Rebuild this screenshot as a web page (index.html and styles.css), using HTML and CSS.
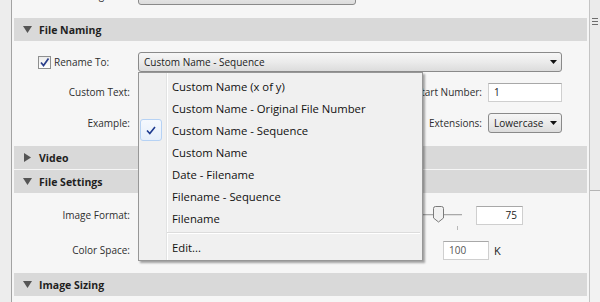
FILE: index.html
```html
<!DOCTYPE html>
<html lang="en">
<head>
    <meta charset="UTF-8">
    <title>Export - File Naming</title>
    <link rel="stylesheet" href="styles.css">
</head>
<body>

<div class="window">
    <div class="side"></div>

    <div class="panel">
        <!-- row scrolled mostly out of view -->
        <div class="row row-cut">
            <span class="lbl">Existing Files:</span>
            <div class="combo combo-mid"><span class="combo-text">Ask what to do</span></div>
        </div>

        <section class="section">
            <div class="sec-head">
                <svg class="tri" width="9" height="7" viewBox="0 0 9 7"><polygon points="0,0 9,0 4.5,7" fill="#555"/></svg>
                File Naming
            </div>
            <div class="sec-body naming">
                <div class="row">
                    <label class="chk-cell">
                        <span class="chk">
                            <svg width="11" height="11" viewBox="0 0 11 11"><path d="M2 5.5 L4.5 8.5 L9.5 1.5" fill="none" stroke="#2b3f8c" stroke-width="1.7"/></svg>
                        </span>
                        Rename To:
                    </label>
                    <div class="combo combo-wide">
                        <span class="combo-text">Custom Name - Sequence</span>
                        <svg class="arrow" width="7" height="4" viewBox="0 0 7 4"><polygon points="0,0 7,0 3.5,4" fill="#111"/></svg>

                        <ul class="menu">
                            <li>Custom Name (x of y)</li>
                            <li>Custom Name - Original File Number</li>
                            <li class="checked">
                                <span class="mark">
                                    <svg width="10" height="9" viewBox="0 0 10 9"><path d="M1 4.5 L3.8 7.5 L9 1" fill="none" stroke="#1d3a8f" stroke-width="1.6"/></svg>
                                </span>
                                Custom Name - Sequence
                            </li>
                            <li>Custom Name</li>
                            <li>Date - Filename</li>
                            <li>Filename - Sequence</li>
                            <li>Filename</li>
                            <li class="sep"></li>
                            <li>Edit...</li>
                        </ul>
                    </div>
                </div>
                <div class="row gap10">
                    <span class="lbl">Custom Text:</span>
                    <div class="field field-grow"></div>
                    <span class="lbl-right">Start Number:</span>
                    <div class="field field-num">1</div>
                </div>
                <div class="row gap11">
                    <span class="lbl">Example:</span>
                    <span class="example"></span>
                    <span class="lbl-right">Extensions:</span>
                    <div class="combo combo-small">
                        <span class="combo-text">Lowercase</span>
                        <svg class="arrow" width="7" height="4" viewBox="0 0 7 4"><polygon points="0,0 7,0 3.5,4" fill="#111"/></svg>
                    </div>
                </div>
            </div>
        </section>

        <section class="section closed">
            <div class="sec-head">
                <svg class="tri" width="9" height="9" viewBox="0 0 9 9"><polygon points="1,0 8,4.5 1,9" fill="#555"/></svg>
                Video
            </div>
        </section>

        <section class="section">
            <div class="sec-head">
                <svg class="tri" width="9" height="7" viewBox="0 0 9 7"><polygon points="0,0 9,0 4.5,7" fill="#555"/></svg>
                File Settings
            </div>
            <div class="sec-body settings">
                <div class="row row-format">
                    <span class="lbl">Image Format:</span>
                    <div class="combo combo-format"></div>
                    <div class="slider">
                        <div class="track"></div>
                        <svg class="thumb" width="11" height="17" viewBox="0 0 11 17">
                            <path d="M0.5 2.5 Q0.5 0.5 2.5 0.5 H8.5 Q10.5 0.5 10.5 2.5 V12 L5.5 16 L0.5 12 Z" fill="#f1f1f1" stroke="#7a7a7a"/>
                        </svg>
                        <span class="tick"></span>
                    </div>
                    <div class="field field-quality">75</div>
                </div>
                <div class="row row-space">
                    <span class="lbl">Color Space:</span>
                    <div class="combo combo-format"></div>
                    <div class="spacer"></div>
                    <div class="field field-size">100</div>
                    <span class="unit">K</span>
                </div>
            </div>
        </section>

        <section class="section">
            <div class="sec-head">
                <svg class="tri" width="9" height="7" viewBox="0 0 9 7"><polygon points="0,0 9,0 4.5,7" fill="#555"/></svg>
                Image Sizing
            </div>
        </section>
    </div>

    <div class="scrollbar">
        <div class="scroll-thumb">
            <span class="grip"></span>
            <span class="grip"></span>
            <span class="grip"></span>
        </div>
    </div>
</div>

</body>
</html>
```

FILE: styles.css
```css
body {
    margin: 0;
    width: 600px;
    height: 302px;
    overflow: hidden;
    font-family: "Open Sans", "Noto Sans", sans-serif;
    font-size: 10px;
    color: #2e2e2e;
    background-color: #ededed;
}
.window {
    display: flex;
    height: 302px;
}
.side {
    width: 11px;
    background-color: #ededed;
}
.panel {
    flex: 1;
    border-left: 1px solid #a3a3a3;
    background-color: #f6f6f6;
    padding: 0 2px;
}

/* rows */
.row {
    display: flex;
    align-items: center;
    height: 20px;
    padding-right: 25px;
}
.row-cut {
    margin-top: -15px;
    margin-bottom: 13px;
}
.gap10 {
    margin-top: 10px;
}
.gap11 {
    margin-top: 11px;
}
.lbl {
    width: 116px;
    margin-right: 8px;
    text-align: right;
    white-space: nowrap;
}
.lbl-right {
    margin: 0 6px 0 10px;
    white-space: nowrap;
}
.chk-cell {
    width: 100px;
    padding-left: 24px;
    display: flex;
    align-items: center;
}
.chk {
    width: 11px;
    height: 11px;
    border: 1px solid #8e8f8f;
    background: linear-gradient(#ececec, #ffffff);
    margin-right: 3px;
    display: flex;
    align-items: center;
    justify-content: center;
}

/* section headers */
.sec-head {
    height: 23px;
    display: flex;
    align-items: center;
    padding-left: 9px;
    background-color: #d9d9d9;
    font-weight: bold;
    font-size: 10.5px;
    color: #1f1f1f;
}
.tri {
    margin-right: 7px;
}
.closed {
    margin-bottom: 1px;
}
.naming {
    padding: 11px 0 13px;
}
.settings {
    padding: 12px 0 13px;
}

/* combos and fields */
.combo {
    position: relative;
    box-sizing: border-box;
    height: 20px;
    display: flex;
    align-items: center;
    padding: 0 4px 0 5px;
    border: 1px solid #8a8a8a;
    border-radius: 3px;
    background: linear-gradient(#f6f6f6, #ebebeb 50%, #dcdcdc);
    color: #222;
    white-space: nowrap;
}
.combo-text {
    flex: 1;
}
.combo-mid {
    width: 218px;
}
.combo-wide {
    flex: 1;
}
.combo-small {
    width: 74px;
}
.combo-format {
    width: 90px;
}
.field {
    box-sizing: border-box;
    height: 19px;
    display: flex;
    align-items: center;
    padding: 0 5px;
    background-color: #fff;
    border: 1px solid #cfcfcf;
    border-top-color: #a8a8a8;
    color: #222;
}
.field-grow {
    flex: 1;
}
.field-num {
    width: 74px;
}
.example {
    flex: 1;
}

/* dropdown menu */
.menu {
    position: absolute;
    top: 19px;
    left: -1px;
    z-index: 2;
    box-sizing: border-box;
    width: 285px;
    margin: 0;
    padding: 2px 2px 2px 1px;
    list-style: none;
    border: 1px solid #979797;
    background: linear-gradient(to right, transparent 27px, #e2e3e3 27px, #e2e3e3 28px, #ffffff 28px, #ffffff 29px, transparent 29px), #f0f0f0;
    box-shadow: 2px 2px 2px rgba(0, 0, 0, 0.35);
    font-size: 11.3px;
    color: #111;
}
.menu li {
    height: 22px;
    display: flex;
    align-items: center;
    padding-left: 32px;
}
.menu li.checked {
    padding-left: 0;
}
.mark {
    box-sizing: border-box;
    width: 22px;
    height: 22px;
    margin-right: 10px;
    display: flex;
    align-items: center;
    justify-content: center;
    border: 1px solid #b6d2f4;
    border-radius: 3px;
    background: linear-gradient(#f5f9fe, #e6effb);
}
.menu li.sep {
    height: 7px;
    padding-left: 0;
    margin-left: 27px;
    background: linear-gradient(transparent 3px, #dcdcdc 3px, #dcdcdc 4px, #fff 4px, #fff 5px, transparent 5px);
}

/* file settings */
.row-format {
    padding-right: 64px;
}
.slider {
    position: relative;
    flex: 1;
    height: 20px;
    margin: 0 14px 0 40px;
}
.track {
    margin-top: 9px;
    height: 1px;
    background-color: #a9a9a9;
    border-bottom: 1px solid #e0e0e0;
}
.thumb {
    position: absolute;
    right: 18px;
    top: 1px;
}
.tick {
    position: absolute;
    right: 4px;
    top: 21px;
    width: 1px;
    height: 4px;
    background-color: #b9b9b9;
}
.field-quality {
    width: 47px;
    justify-content: flex-end;
}
.row-space {
    margin-top: 15px;
    padding-right: 81px;
}
.spacer {
    flex: 1;
}
.field-size {
    width: 46px;
    color: #555;
}
.unit {
    width: 12px;
    margin-left: 5px;
    color: #222;
    font-size: 11px;
}

/* scrollbar */
.scrollbar {
    width: 10px;
    border-left: 1px solid #c4c4c4;
    background-color: #f2f2f2;
}
.scroll-thumb {
    height: 191px;
    box-sizing: border-box;
    border-bottom: 1px solid #b5b5b5;
    background-color: #ebebeb;
    display: flex;
    flex-direction: column;
    align-items: center;
    padding-top: 18px;
    gap: 2px;
}
.grip {
    width: 6px;
    height: 1px;
    background-color: #6d6d6d;
}
```
